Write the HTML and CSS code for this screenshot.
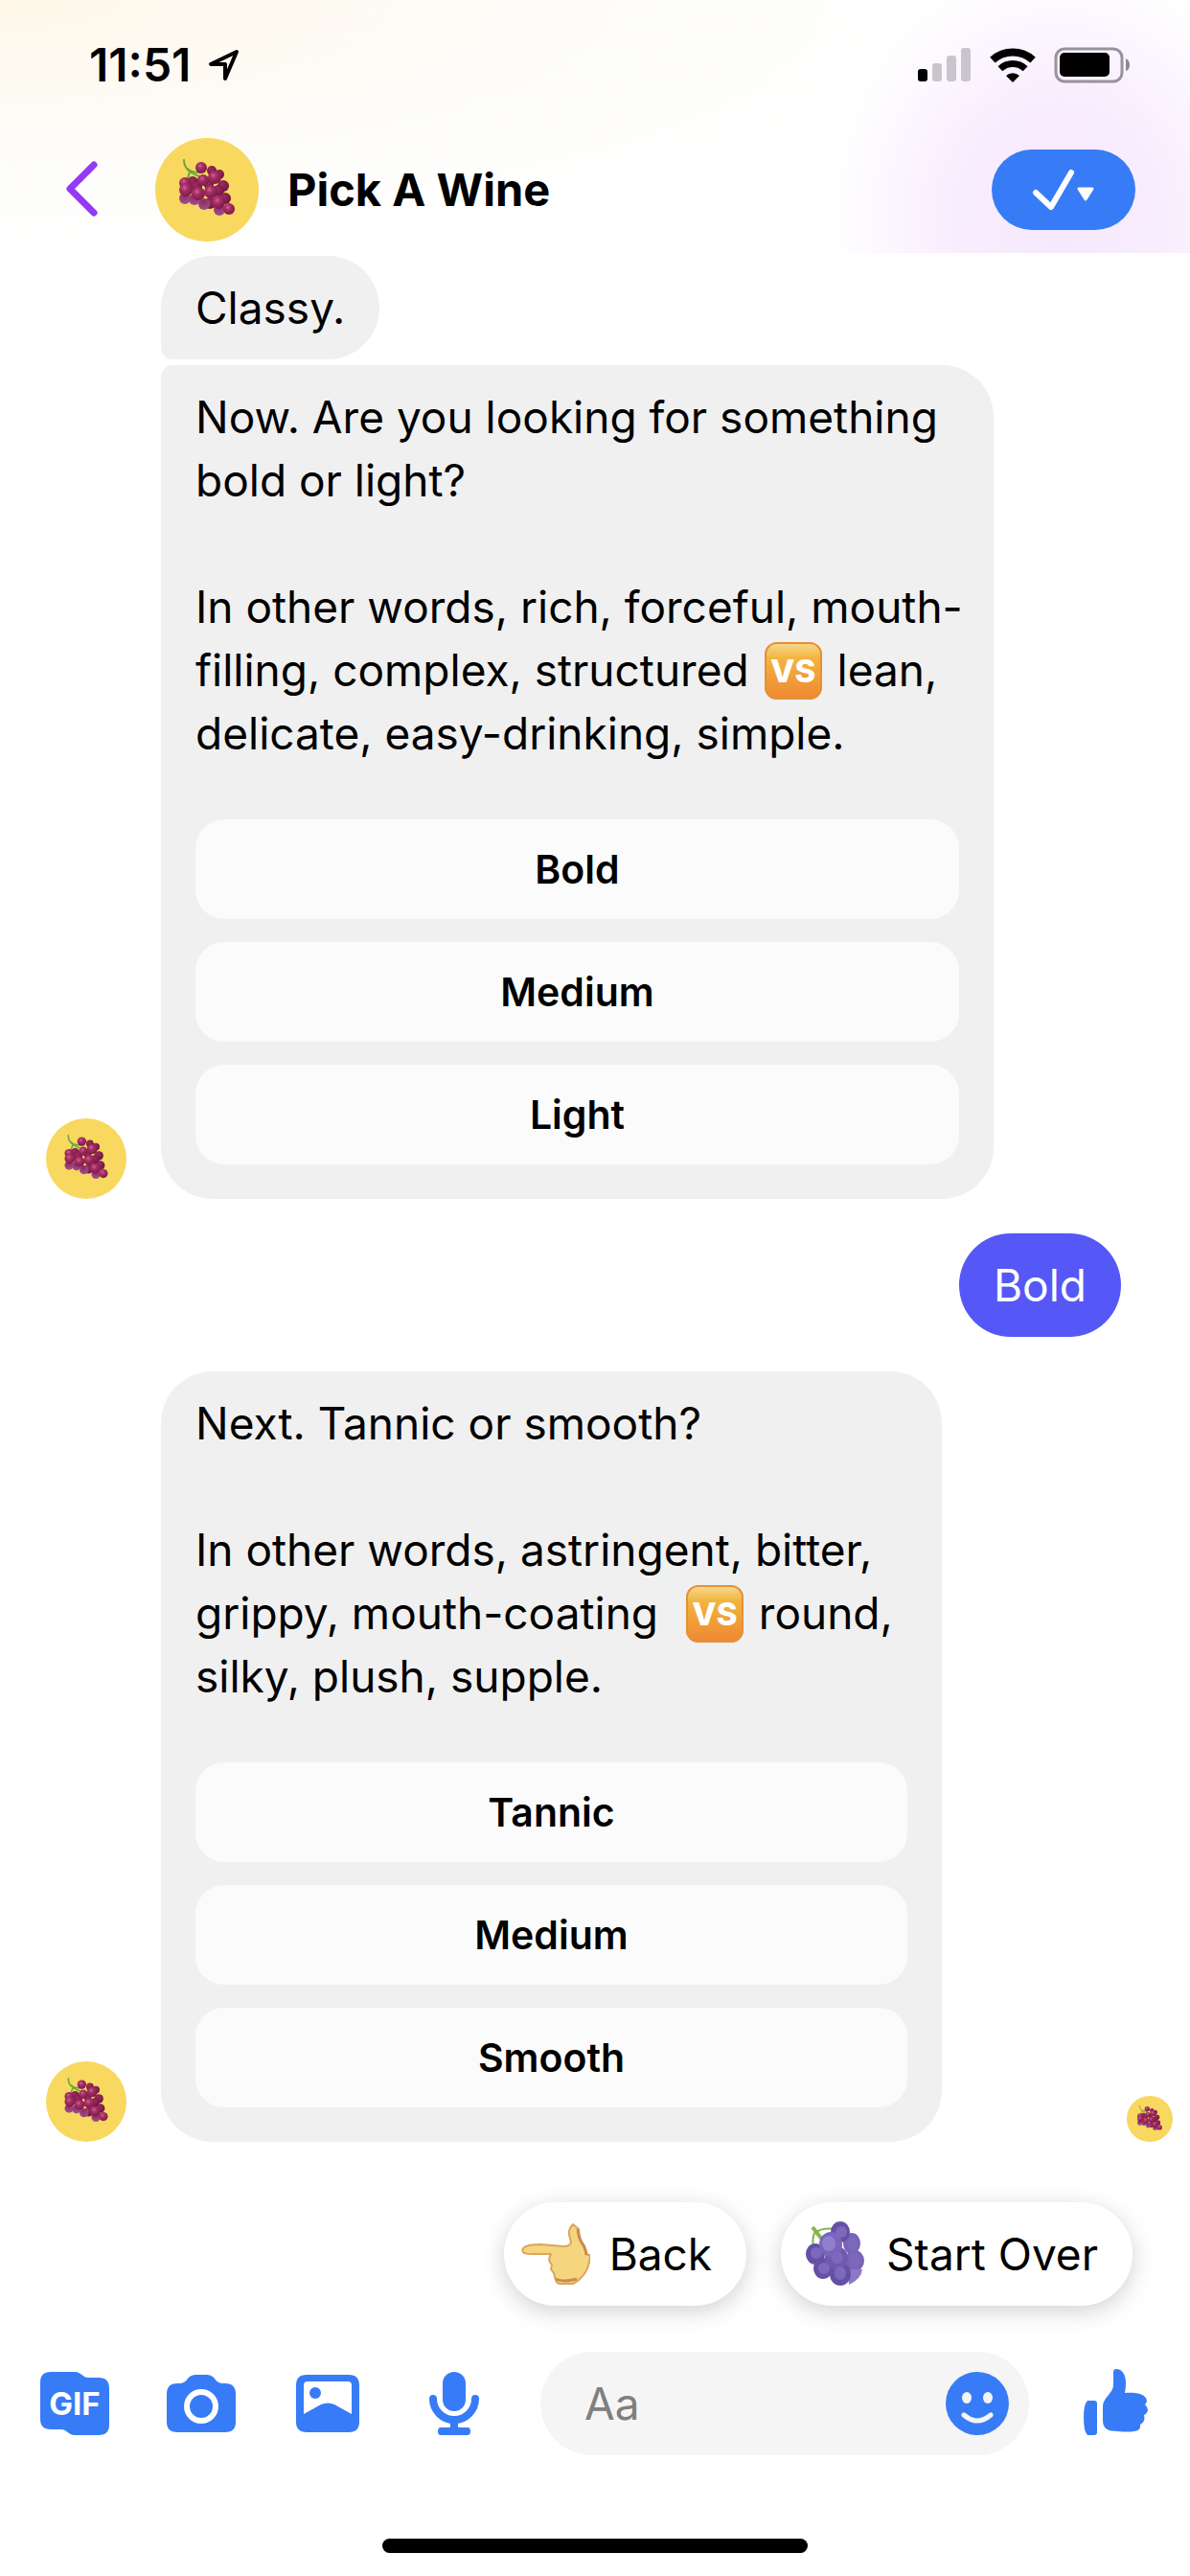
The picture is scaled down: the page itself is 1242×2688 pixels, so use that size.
FILE: index.html
```html
<!DOCTYPE html>
<html lang="en">
<head>
<meta charset="utf-8">
<meta name="viewport" content="width=device-width, initial-scale=1">
<title>Pick A Wine</title>
<link rel="stylesheet" href="styles.css">
</head>
<body>
<svg class="defs" aria-hidden="true">
  <defs>
    <radialGradient id="berry" cx="40%" cy="35%" r="65%">
      <stop offset="0" stop-color="#cc6496"/><stop offset=".35" stop-color="#a83068"/><stop offset="1" stop-color="#7c1a48"/>
    </radialGradient>
    <radialGradient id="berryDark" cx="40%" cy="35%" r="65%">
      <stop offset="0" stop-color="#a02c62"/><stop offset="1" stop-color="#6c1640"/>
    </radialGradient>
    <radialGradient id="berryPurple" cx="45%" cy="25%" r="75%">
      <stop offset="0" stop-color="#8e2a60"/><stop offset="1" stop-color="#a0508e"/>
    </radialGradient>
    <symbol id="avatar" viewBox="0 0 108 108">
      <circle cx="54" cy="54" r="54" fill="#f8d85e"/>
      <g fill="url(#berryDark)">
        <circle cx="59" cy="34" r="5"/><circle cx="67" cy="38" r="5"/><circle cx="71" cy="50" r="6"/>
        <circle cx="39" cy="46" r="6"/><circle cx="43" cy="51" r="6"/><circle cx="56" cy="49" r="5"/>
        <circle cx="66" cy="55" r="6"/><circle cx="73" cy="63" r="6"/><circle cx="57" cy="68" r="6"/>
      </g>
      <g fill="url(#berryPurple)">
        <circle cx="31" cy="63" r="6"/><circle cx="41" cy="64" r="6"/><circle cx="51" cy="69" r="6"/><circle cx="67" cy="75" r="6"/>
      </g>
      <path d="M30 23C30 32 36 36 46 40M34 32C37 36 44 36 48 36M36 35C35 40 33 42 33 45" fill="none" stroke="#6aa63f" stroke-width="2" stroke-linecap="round"/>
      <g fill="url(#berry)">
        <circle cx="48" cy="31" r="6"/><circle cx="62" cy="41" r="7"/><circle cx="50" cy="44" r="6"/>
        <circle cx="31" cy="47" r="6"/><circle cx="32" cy="54" r="7"/><circle cx="45" cy="58" r="7"/>
        <circle cx="58" cy="56" r="7"/><circle cx="66" cy="67" r="7"/><circle cx="77" cy="74" r="6"/>
      </g>
    </symbol>
  </defs>
</svg>

<header class="top">
  <div class="status">
    <span class="status-time">11:51</span>
    <svg class="status-location" width="34" height="34" viewBox="0 0 34 34" aria-hidden="true"><path d="M30 3L3 16H18V31Z" fill="none" stroke="#000" stroke-width="4" stroke-linejoin="round"/></svg>
    <div class="status-icons">
      <svg width="56" height="36" viewBox="0 0 56 36" aria-hidden="true"><rect y="22" width="10" height="13" rx="3"/><g fill="#c9c5cd"><rect x="15" y="16" width="10" height="19" rx="3"/><rect x="30" y="8" width="10" height="27" rx="3"/><rect x="45" width="10" height="35" rx="3"/></g></svg>
      <svg width="48" height="36" viewBox="0 0 48 36" aria-hidden="true"><g fill="none" stroke="#000"><path d="M2.900 12.600A31.500 31.500 0 0 1 45.100 12.600" stroke-width="8"/><path d="M10.900 21.700A19 19 0 0 1 37.100 21.700" stroke-width="7"/></g><path d="M17 29A10 10 0 0 1 31 29L24 36Z"/></svg>
      <svg width="80" height="38" viewBox="0 0 80 38" aria-hidden="true"><rect x="2" y="2" width="69" height="34" rx="9" fill="none" stroke="#97929c" stroke-width="3"/><rect x="6" y="6" width="52" height="25" rx="5"/><path d="M75 12Q79 14 79 19T75 25Z" fill="#8c8890"/></svg>
    </div>
  </div>
  <div class="bar">
    <button class="back" aria-label="Go back"><svg width="36" height="60" viewBox="0 0 36 60"><path d="M31 4L6 29L31 54" fill="none" stroke="#933af6" stroke-width="7" stroke-linecap="round" stroke-linejoin="round"/></svg></button>
    <svg class="avatar-lg" aria-hidden="true"><use href="#avatar"/></svg>
    <h1 class="title">Pick A Wine</h1>
    <button class="done" aria-label="Mark as done"><svg width="66" height="44" viewBox="0 0 66 44"><path d="M4 25L20 40L41 4" fill="none" stroke="#fff" stroke-width="6" stroke-linecap="round" stroke-linejoin="round"/><path d="M49 21H63L56 32Z" fill="#fff" stroke="#fff" stroke-width="3" stroke-linejoin="round"/></svg></button>
  </div>
</header>

<main class="thread">
  <div class="row">
    <svg class="avatar-md" aria-hidden="true"><use href="#avatar"/></svg>
    <div class="group">
      <div class="bubble first"><p>Classy.</p></div>
      <div class="bubble last card">
        <p>Now. Are you looking for something bold or light?<br><br>In other words, rich, forceful, mouth-filling, complex, structured <span class="vs">VS</span> lean, delicate, easy-drinking, simple.</p>
        <div class="options"><button>Bold</button><button>Medium</button><button>Light</button></div>
      </div>
    </div>
  </div>

  <div class="bubble sent"><p>Bold</p></div>

  <div class="row">
    <svg class="avatar-md" aria-hidden="true"><use href="#avatar"/></svg>
    <div class="group group-narrow">
      <div class="bubble card">
        <p>Next. Tannic or smooth?<br><br>In other words, astringent, bitter, grippy, mouth-coating&nbsp; <span class="vs">VS</span> round, silky, plush, supple.</p>
        <div class="options"><button>Tannic</button><button>Medium</button><button>Smooth</button></div>
      </div>
    </div>
    <svg class="avatar-sm" role="img" aria-label="Seen"><use href="#avatar"/></svg>
  </div>
</main>

<footer class="bottom">
  <div class="chips">
    <button class="chip">
      <svg width="72" height="72" viewBox="0 0 72 72" aria-hidden="true"><path d="M2 30C5 26 15 26 20 26L44 28Q51 28 52 24C52 20 49 17 50 12Q51 8 54 5L60 10Q60 19 63 24Q67 29 69 37H72Q71 49 67 55Q62 63 54 67H40Q36 66 35 60Q35 56 31 52L32 47Q27 43 31 36L10 36Q-1 36 2 30Z" fill="#f5d67f" stroke="#dca55c" stroke-width="2" stroke-linejoin="round"/><path d="M59 10Q60 19 63 24Q67 29 68 37M36 62Q44 66 58 62" fill="none" stroke="#c98c4c" stroke-width="3"/></svg>
      Back
    </button>
    <button class="chip">
      <svg width="72" height="72" viewBox="0 0 72 72" aria-hidden="true">
        <g fill="none" stroke="#86b54c" stroke-width="2"><path d="M15 8L26 22" stroke-width="4"/><path d="M19 13Q26 8 40 10M18 12Q14 20 16 28"/></g>
        <g fill="#7763b8"><ellipse cx="56" cy="25" rx="9" ry="11"/><ellipse cx="59" cy="43" rx="10" ry="11"/><path d="M52 52L67 52Q66 62 53 68Z" fill="#8b78c8"/></g>
        <g fill="#6450a6"><ellipse cx="44" cy="13" rx="10" ry="11"/><ellipse cx="18" cy="36" rx="10" ry="11"/><ellipse cx="26" cy="51" rx="10" ry="11"/><ellipse cx="44" cy="57" rx="11" ry="12"/></g>
        <ellipse cx="40" cy="40" rx="12" ry="12" fill="#6d59af"/><ellipse cx="34" cy="26" rx="12" ry="13" fill="#7965bb"/>
        <g fill="#7c69bb"><ellipse cx="45" cy="13" rx="6" ry="6"/><ellipse cx="19" cy="35" rx="6" ry="6"/><ellipse cx="57" cy="26" rx="5" ry="7"/><ellipse cx="41" cy="40" rx="6" ry="6"/><ellipse cx="59" cy="42" rx="6" ry="7"/><ellipse cx="27" cy="51" rx="6" ry="6"/><ellipse cx="44" cy="56" rx="6" ry="7"/></g>
        <ellipse cx="32" cy="25" rx="7" ry="8" fill="#9080cc"/>
      </svg>
      Start Over
    </button>
  </div>

  <form class="composer">
    <div class="tools">
      <button type="button" aria-label="GIF"><svg width="72" height="66" viewBox="0 0 72 66"><path d="M11 0H36C43 0 44 6 50 6H61Q72 6 72 17V55Q72 66 61 66H36C29 66 28 60 22 60H11Q0 60 0 49V11Q0 0 11 0Z"/><text x="36" y="45" text-anchor="middle" class="gif-label">GIF</text></svg></button>
      <button type="button" aria-label="Camera"><svg width="72" height="60" viewBox="0 0 72 60"><path fill-rule="evenodd" d="M11 9H14C22 9 21 0 30 0H42C51 0 50 9 58 9H61Q72 9 72 20V49Q72 60 61 60H11Q0 60 0 49V20Q0 9 11 9ZM36 15A18 18 0 1 0 36 51A18 18 0 1 0 36 15ZM36 21A12 12 0 1 1 36 45A12 12 0 1 1 36 21Z"/></svg></button>
      <button type="button" aria-label="Photos"><svg width="66" height="60" viewBox="0 0 66 60"><path fill-rule="evenodd" d="M11 0H55Q66 0 66 11V49Q66 60 55 60H11Q0 60 0 49V11Q0 0 11 0ZM12 7Q8 7 8 11V41L26 31Q33 28 40 31L58 41V11Q58 7 54 7Z"/><circle cx="20" cy="19" r="6"/></svg></button>
      <button type="button" aria-label="Record voice"><svg width="52" height="66" viewBox="0 0 52 66"><rect x="14" width="24" height="41" rx="12"/><path d="M4 28A22 22 0 0 0 48 28" fill="none" stroke="#377cf6" stroke-width="8" stroke-linecap="round"/><path d="M22 52H30V57Q30 58 31 58H40Q43 58 43 62T40 66H12Q9 66 9 62T12 58H21Q22 58 22 57Z"/></svg></button>
    </div>
    <div class="field">
      <input type="text" placeholder="Aa" aria-label="Message">
      <button type="button" aria-label="Emoji"><svg width="66" height="66" viewBox="0 0 66 66"><circle cx="33" cy="33" r="33"/><g fill="#f5f5f5"><ellipse cx="22" cy="27" rx="5" ry="6"/><ellipse cx="44" cy="27" rx="5" ry="6"/></g><path d="M19 45Q33 57 47 45" fill="none" stroke="#f5f5f5" stroke-width="5" stroke-linecap="round"/></svg></button>
    </div>
    <button type="button" class="like" aria-label="Send like"><svg width="72" height="72" viewBox="0 0 72 72"><path d="M7 33H14Q17 33 17 36V66Q17 69 14 69H7Q3 65 3 51T7 33ZM34 3Q34 0 37 0C43 0 47 6 47 14Q47 20 46 25C58 24 68 26 69 33Q69 35 67 37Q70 40 70 43Q69 47 66 48Q68 55 62 58Q63 64 56 65Q48 66 39 65C28 65 23 62 23 54V39C23 30 34 25 34 17Z"/></svg></button>
  </form>
  <div class="home"></div>
</footer>
</body>
</html>
```
FILE: styles.css
```css
* { box-sizing: border-box; }

body {
  margin: 0;
  min-height: 100vh;
  display: flex;
  flex-direction: column;
  background: #fff;
  color: #000;
  font-family: Inter, "Liberation Sans", sans-serif;
  font-size: 46px;
  line-height: 66px;
}

button, input {
  margin: 0;
  padding: 0;
  border: 0;
  background: none;
  color: inherit;
  font: inherit;
}

svg { display: block; flex: none; }
p, h1 { margin: 0; }

.defs { position: absolute; width: 0; height: 0; }

/* Header */
.top {
  background:
    radial-gradient(ellipse 240px 270px at 89% 230px, #f6e8fd 0%, #f8edfe 45%, rgba(250, 244, 255, 0) 100%),
    radial-gradient(ellipse 1000px 264px at 0 0, #fff8ea 0%, #fdfcf9 60%, rgba(255, 255, 255, 0) 100%),
    #fff;
}

.status {
  height: 132px;
  padding: 4px 62px 0 93px;
  display: flex;
  align-items: center;
}

.status-time { font-size: 48px; font-weight: 600; }
.status-location { margin-left: 18px; }

.status-icons {
  margin-left: auto;
  display: flex;
  align-items: center;
  gap: 19px;
}

.bar {
  height: 132px;
  padding: 0 57px 0 67px;
  display: flex;
  align-items: center;
}

.back { width: 95px; }
.avatar-lg { width: 108px; height: 108px; }

.title {
  flex: 1;
  margin-left: 30px;
  font-size: 47px;
  font-weight: 700;
}

.done {
  width: 150px;
  height: 84px;
  border-radius: 42px;
  display: flex;
  align-items: center;
  justify-content: center;
  background: #377cf6;
}

/* Conversation */
.thread {
  flex: 1;
  padding: 3px 18px 63px 48px;
  display: flex;
  flex-direction: column;
  gap: 36px;
}

.row { display: flex; align-items: flex-end; }
.avatar-md { width: 84px; height: 84px; margin-right: 36px; }
.avatar-sm { width: 48px; height: 48px; margin-left: auto; }

.group {
  max-width: 869px;
  display: flex;
  flex-direction: column;
  align-items: flex-start;
  gap: 6px;
}

.group-narrow { max-width: 815px; }

.bubble {
  padding: 21px 36px;
  border-radius: 54px;
  background: #f0f0f0;
}

.first { border-bottom-left-radius: 12px; }
.last { border-top-left-radius: 12px; }
.card { width: 100%; padding-bottom: 36px; }
.card p { margin-right: -12px; }

.sent {
  align-self: flex-end;
  margin-right: 54px;
  background: #5558f6;
  color: #fff;
}

.vs {
  display: inline-block;
  width: 60px;
  height: 60px;
  margin: 0 3px;
  border-radius: 13px;
  overflow: hidden;
  vertical-align: -14px;
  text-align: center;
  font-size: 33px;
  line-height: 60px;
  font-weight: 800;
  color: #fff;
  background: linear-gradient(#f7dc94, #f3b43f 28%, #ee8732);
  box-shadow: inset 0 0 0 2px #e2913a;
}

.options {
  margin-top: 57px;
  display: flex;
  flex-direction: column;
  gap: 24px;
}

.options button {
  height: 104px;
  border-radius: 30px;
  background: #fbfbfb;
  font-size: 41px;
  font-weight: 600;
}

/* Quick replies */
.chips {
  padding: 0 60px;
  display: flex;
  justify-content: flex-end;
  gap: 36px;
}

.chip {
  height: 108px;
  padding: 0 36px 0 18px;
  border-radius: 54px;
  display: flex;
  align-items: center;
  gap: 20px;
  background: #fff;
  box-shadow: 0 6px 24px rgba(0, 0, 0, .18);
}

/* Composer */
.composer {
  margin: 48px 42px 0;
  display: flex;
  align-items: center;
  gap: 54px;
  fill: #377cf6;
}

.tools { display: flex; gap: 60px; }

.tools button, .like {
  width: 72px;
  height: 72px;
  display: flex;
  align-items: center;
  justify-content: center;
}

.gif-label { fill: #fff; font-size: 33px; font-weight: 700; }

.field {
  flex: 1;
  min-width: 0;
  height: 108px;
  padding: 0 21px 0 46px;
  border-radius: 54px;
  display: flex;
  align-items: center;
  background: #f5f5f5;
}

.field input {
  flex: 1;
  min-width: 0;
  height: 66px;
  outline: 0;
}

.field input::placeholder { color: #7f7f7f; opacity: 1; }

.home {
  width: 444px;
  height: 15px;
  margin: 87px auto 24px;
  border-radius: 8px;
  background: #000;
}
```
